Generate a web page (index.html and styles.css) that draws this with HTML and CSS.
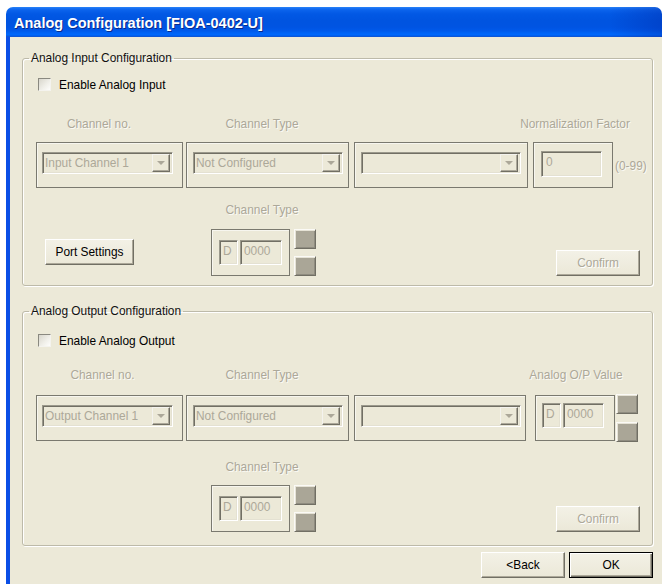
FILE: index.html
```html
<!DOCTYPE html>
<html lang="en">
<head>
<meta charset="utf-8">
<title>Analog Configuration</title>
<link rel="stylesheet" href="styles.css">
</head>
<body>
<div class="window">
  <div class="titlebar">Analog Configuration [FIOA-0402-U]</div>
  <div class="client">

    <fieldset class="group group-in">
      <legend>Analog Input Configuration</legend>
      <label class="check"><span class="box"></span>Enable Analog Input</label>

      <div class="heads">
        <span class="head h-chan">Channel no.</span>
        <span class="head h-type">Channel Type</span>
        <span class="head h-norm">Normalization Factor</span>
      </div>

      <div class="fields">
        <div class="frame f1">
          <div class="combo w-chan"><span class="val">Input Channel 1</span><span class="drop"><i class="tri"></i></span></div>
        </div>
        <div class="frame f2">
          <div class="combo w-type"><span class="val">Not Configured</span><span class="drop"><i class="tri"></i></span></div>
        </div>
        <div class="frame f3">
          <div class="combo w-sub"><span class="val"></span><span class="drop"><i class="tri"></i></span></div>
        </div>
        <div class="frame f4">
          <span class="edit norm">0</span>
        </div>
        <span class="range">(0-99)</span>
      </div>

      <div class="lower">
        <button class="btn port" type="button">Port Settings</button>
        <div class="spin-col">
          <span class="head">Channel Type</span>
          <div class="spinner">
            <div class="frame sp-frame"><span class="edit d">D</span><span class="edit num">0000</span></div>
            <div class="squares"><span class="sq"></span><span class="sq"></span></div>
          </div>
        </div>
        <button class="btn confirm" type="button" disabled>Confirm</button>
      </div>
    </fieldset>

    <fieldset class="group group-out">
      <legend>Analog Output Configuration</legend>
      <label class="check"><span class="box"></span>Enable Analog Output</label>

      <div class="heads">
        <span class="head h-chan">Channel no.</span>
        <span class="head h-type">Channel Type</span>
        <span class="head h-value">Analog O/P Value</span>
      </div>

      <div class="fields">
        <div class="frame f1">
          <div class="combo w-chan"><span class="val">Output Channel 1</span><span class="drop"><i class="tri"></i></span></div>
        </div>
        <div class="frame f2">
          <div class="combo w-type"><span class="val">Not Configured</span><span class="drop"><i class="tri"></i></span></div>
        </div>
        <div class="frame f3">
          <div class="combo w-sub"><span class="val"></span><span class="drop"><i class="tri"></i></span></div>
        </div>
        <div class="frame f4 value-frame"><span class="edit d">D</span><span class="edit num">0000</span></div>
        <div class="squares value-squares"><span class="sq"></span><span class="sq"></span></div>
      </div>

      <div class="lower">
        <div class="spin-col">
          <span class="head">Channel Type</span>
          <div class="spinner">
            <div class="frame sp-frame"><span class="edit d">D</span><span class="edit num">0000</span></div>
            <div class="squares"><span class="sq"></span><span class="sq"></span></div>
          </div>
        </div>
        <button class="btn confirm" type="button" disabled>Confirm</button>
      </div>
    </fieldset>

    <div class="actions">
      <button class="btn" type="button">&lt;Back</button>
      <button class="btn default" type="button">OK</button>
    </div>
  </div>
</div>
</body>
</html>
```

FILE: styles.css
```css
* { box-sizing: border-box; }

body {
  margin: 0;
  background: #fff;
  font-family: "Liberation Sans", Arial, sans-serif;
  font-size: 11.9px;
  color: #000;
  overflow: hidden;
}

/* window chrome */
.window {
  margin: 7px 0 0 6px;
  height: 577px;
  display: flex;
  flex-direction: column;
}

.titlebar {
  flex: none;
  height: 30px;
  padding-left: 8px;
  border-radius: 7px 7px 0 0;
  background:
    linear-gradient(to right, rgba(0, 0, 0, 0) 92%, rgba(0, 20, 140, 0.25) 100%),
    linear-gradient(to bottom,
      #2d86f6 0, #1a74f5 1px, #0b63ec 3px, #0258e4 7px, #0054e0 14px,
      #0054e2 20px, #005aeb 24px, #0063f6 26px, #0068fb 28px, #0058e6 29px, #1a55c8 30px);
  color: #fff;
  font-weight: bold;
  font-size: 14.5px;
  line-height: 32px;
  white-space: nowrap;
  overflow: hidden;
  text-shadow: 1px 1px 0 #0b2a8a;
}

.client {
  flex: 1;
  display: flex;
  flex-direction: column;
  background: #ece9d8;
  border-left: 4px solid #0a4ee6;
}

/* group boxes */
.group {
  margin: 14px 9px 0 12px;
  padding: 0 12px 9px 13px;
  min-width: 0;
  border: 1px solid #bdbaa9;
  border-radius: 3px;
  box-shadow: 1px 1px 0 #fff, inset 1px 1px 0 #fff;
}

.group-out {
  margin-top: 18px;
  padding-bottom: 13px;
}

.group legend {
  margin-left: -7px;
  padding: 0 2px;
  line-height: 14px;
  color: #111;
}

.check {
  display: flex;
  align-items: center;
  gap: 8px;
  height: 13px;
  margin: 13px 0 0 2px;
}

.group-out .check { margin-top: 16px; }

.box {
  width: 13px;
  height: 13px;
  border: 1px solid;
  border-color: #8a8980 #f4f3ee #f4f3ee #8a8980;
  background: linear-gradient(135deg, #d8d6cc 0%, #f1f0ea 60%, #fdfdfb 100%);
}

/* disabled static text */
.head,
.range {
  color: #aca899;
  text-shadow: 1px 1px 0 #fbfaf5;
  white-space: nowrap;
}

.heads {
  display: flex;
  height: 14px;
  line-height: 14px;
  margin-top: 26px;
}

.group-out .heads { margin-top: 21px; }

.heads .head {
  flex: none;
  display: flex;
  justify-content: center;
}

.h-chan { width: 126px; }
.h-type { width: 152px; margin-left: 24px; }
.h-norm { width: 84px; margin-left: 195px; }

.group-out .h-chan { width: 133px; }
.group-out .h-type { margin-left: 17px; }
.h-value { width: 96px; margin-left: 190px; }

/* field row */
.fields {
  display: flex;
  align-items: flex-start;
  margin-top: 11px;
}

.group-out .fields { margin-top: 13px; }

.frame {
  flex: none;
  border: 1px solid #7a796f;
  box-shadow: inset 1px 1px 0 rgba(255, 255, 255, 0.6);
}

.fields .frame {
  height: 46px;
  display: flex;
  align-items: flex-start;
  padding-top: 9px;
}

.f1 { width: 147px; padding-left: 5px; }
.f2 { width: 163px; margin-left: 3px; padding-left: 6px; }
.f3 { width: 174px; margin-left: 5px; padding-left: 6px; }
.f4 { width: 80px; margin-left: 5px; padding-left: 7px; }

.group-in .fields .f4 { padding-top: 8px; }

.group-out .f3 { width: 172px; }
.group-out .f4 { margin-left: 9px; padding-left: 6px; }

.range {
  flex: none;
  margin: 17px 0 0 2px;
}

/* sunken controls */
.combo,
.edit {
  flex: none;
  border: 1px solid;
  border-color: #9b998c #fff #fff #9b998c;
  box-shadow: inset 1px 1px 0 #716f64, inset -1px -1px 0 #e4e1d2;
  color: #aca899;
}

.combo {
  height: 22px;
  display: flex;
  align-items: center;
  padding: 1px 2px 1px 2px;
}

.w-chan { width: 131px; }
.w-type { width: 150px; }
.w-sub { width: 160px; }

.val {
  flex: 1;
  padding-left: 0;
  white-space: nowrap;
  overflow: hidden;
}

.drop {
  flex: none;
  width: 18px;
  height: 18px;
  display: flex;
  align-items: center;
  justify-content: center;
  border: 1px solid;
  border-color: #f4f3ee #716f64 #716f64 #f4f3ee;
  box-shadow: inset -1px -1px 0 #aca899;
}

.tri {
  width: 0;
  height: 0;
  border-left: 4px solid transparent;
  border-right: 4px solid transparent;
  border-top: 4px solid #aca899;
}

.edit {
  height: 25px;
  display: flex;
  align-items: flex-start;
  padding: 3px 0 0 3px;
}

.norm {
  width: 61px;
  height: 26px;
  padding-left: 4px;
}

.edit.d { width: 19px; padding-left: 3px; }
.edit.num { width: 42px; margin-left: 2px; padding-left: 3px; }

.fields .value-frame {
  padding-top: 7px;
}

.value-frame .edit.num { width: 41px; }

/* spin squares */
.squares {
  flex: none;
  display: flex;
  flex-direction: column;
  justify-content: space-between;
}

.sq {
  width: 22px;
  height: 20px;
  border: 1px solid;
  border-color: #fbfaf6 #716f64 #716f64 #fbfaf6;
  box-shadow: inset 1px 1px 0 #e6e3d6, inset -1px -1px 0 #8f8c80;
  background: #aaa697;
}

.value-squares {
  height: 48px;
  margin: -1px 0 0 1px;
}

/* lower row */
.lower {
  display: flex;
  align-items: flex-start;
  margin-top: 15px;
}

.group-out .lower { margin-top: 18px; }

.spin-col {
  flex: none;
  width: 105px;
  margin-left: 77px;
  display: flex;
  flex-direction: column;
}

.group-out .spin-col { margin-left: 175px; }

.spin-col .head {
  display: flex;
  justify-content: center;
  line-height: 14px;
  padding-right: 3px;
}

.spinner {
  display: flex;
  margin-top: 12px;
}

.group-out .spinner { margin-top: 11px; }

.sp-frame {
  width: 79px;
  height: 47px;
  display: flex;
  align-items: center;
  padding-left: 7px;
}

.spinner .squares {
  height: 47px;
  margin-left: 4px;
}

/* push buttons */
.btn {
  flex: none;
  width: 84px;
  height: 26px;
  padding: 0;
  font: inherit;
  color: #000;
  background: linear-gradient(to bottom, #f3f1e6, #ebe8d8);
  border: 1px solid;
  border-color: #fff #716f64 #716f64 #fff;
  box-shadow: inset -1px -1px 0 #aca899;
}

.port {
  width: 89px;
  margin: 36px 0 0 9px;
}

.confirm {
  margin: 47px 0 0 auto;
  color: #aca899;
  text-shadow: 1px 1px 0 #fff;
}

.group-out .confirm { margin-top: 46px; }

.actions {
  display: flex;
  justify-content: flex-end;
  gap: 4px;
  margin: 6px 9px 0 0;
}

.default {
  border: 1px solid #000;
  box-shadow: inset 1px 1px 0 #fff, inset -1px -1px 0 #716f64, inset -2px -2px 0 #aca899;
}
```
